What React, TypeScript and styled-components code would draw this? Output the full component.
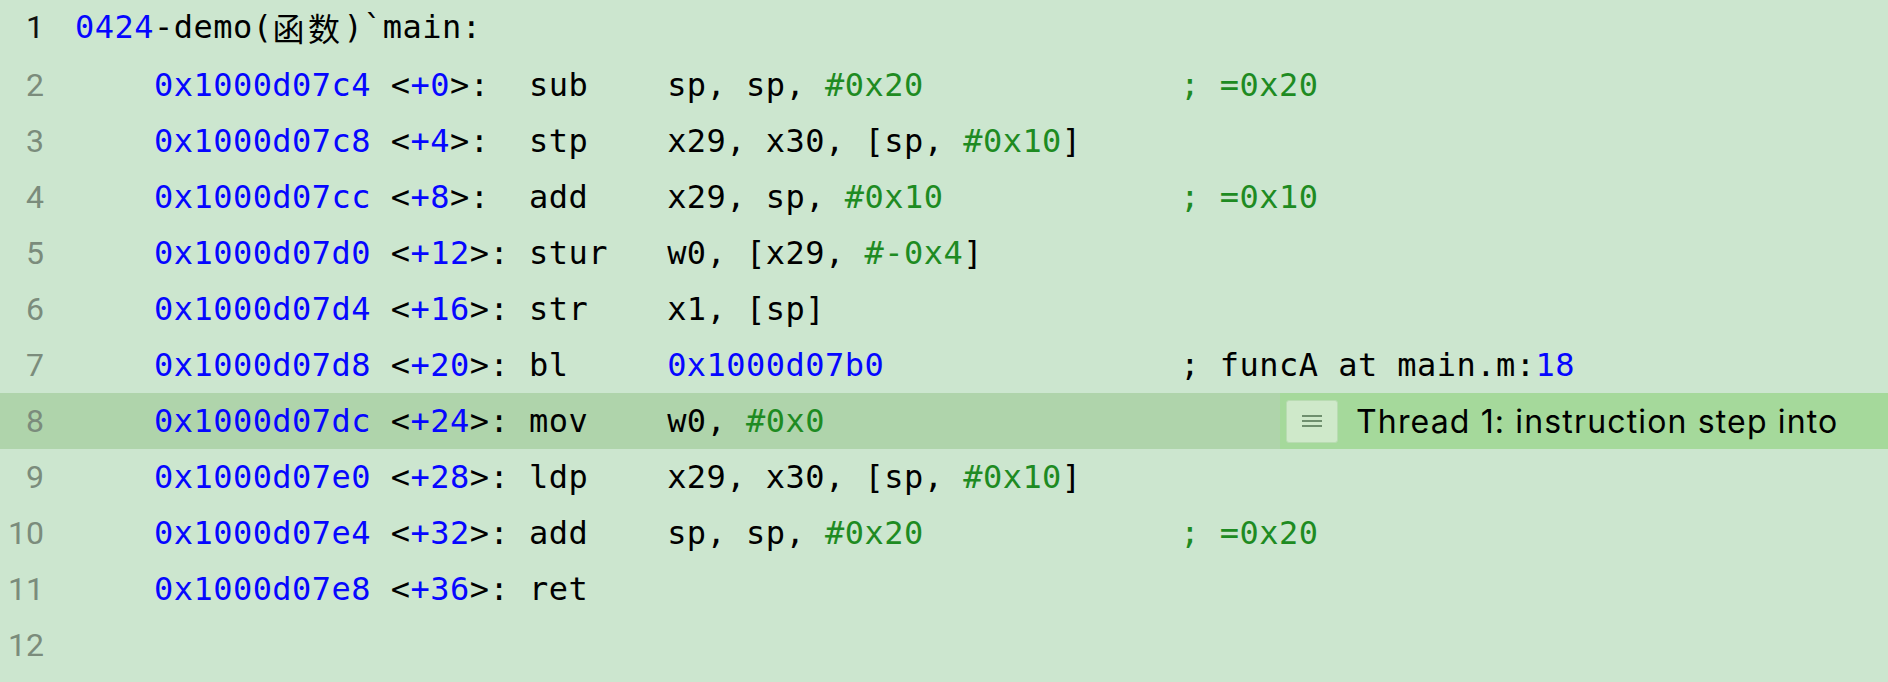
import React from "react";
import styled, { createGlobalStyle } from "styled-components";

const GlobalStyle = createGlobalStyle`
  html, body {
    margin: 0;
    padding: 0;
    background: #cce6cf;
  }
  #root {
    min-height: 100vh;
  }
`;

type Tone = "blue" | "green" | "black" | "cjk";

const toneColor: Record<Tone, string> = {
  blue: "#0606ff",
  green: "#1e8b22",
  black: "#000000",
  cjk: "#000000",
};

const Editor = styled.div`
  display: flex;
  flex-direction: column;
  padding-top: 1px;
  background: #cce6cf;
  width: 1888px;
  height: 682px;
  overflow: hidden;
`;

const Row = styled.div<{ $current?: boolean; $lift?: boolean }>`
  display: flex;
  align-items: stretch;
  box-sizing: border-box;
  height: 56px;
  padding-bottom: ${(p) => (p.$lift ? "5px" : "0")};
  background: ${(p) => (p.$current ? "#afd4ab" : "transparent")};
`;

const Gutter = styled.div<{ $active?: boolean }>`
  flex: none;
  width: 44px;
  display: flex;
  align-items: center;
  justify-content: flex-end;
  font-family: Roboto, "Liberation Sans", sans-serif;
  font-size: 32px;
  color: ${(p) => (p.$active ? "#111" : "#7b8c7c")};
`;

const Code = styled.div`
  flex: 1;
  display: flex;
  align-items: center;
  padding-left: 31px;
  font-family: "DejaVu Sans Mono", "Noto Sans CJK SC", monospace;
  font-size: 32px;
  letter-spacing: 0.47px;
  white-space: pre;
  color: #000;
`;

const Token = styled.span<{ $tone: Tone }>`
  color: ${(p) => toneColor[p.$tone]};
  letter-spacing: ${(p) => (p.$tone === "cjk" ? "3.5px" : "inherit")};
`;

const Annotation = styled.div`
  flex: none;
  width: 602px;
  display: flex;
  align-items: center;
  gap: 18px;
  padding-left: 6px;
  background: #a5d99b;
`;

const MenuBox = styled.div`
  flex: none;
  width: 52px;
  height: 43px;
  box-sizing: border-box;
  border: 1px solid #b9dcb2;
  border-radius: 3px;
  background: #cfe9ca;
  display: flex;
  align-items: center;
  justify-content: center;
`;

const AnnotationText = styled.span`
  font-family: Inter, "Liberation Sans", sans-serif;
  font-size: 32px;
  letter-spacing: 1.15px;
  color: #000;
`;

type Seg = [string, Tone];

const A = (s: string): Seg => [s, "blue"];
const G = (s: string): Seg => [s, "green"];
const K = (s: string): Seg => [s, "black"];
const C = (s: string): Seg => [s, "cjk"];

function instr(
  addr: string,
  off: string,
  mnem: string,
  ops: Seg[],
  comment?: Seg[]
): Seg[] {
  const head = `<+${off}>:`;
  const segs: Seg[] = [
    K("    "),
    A(addr),
    K(" <"),
    A(`+${off}`),
    K(">:" + " ".repeat(Math.max(1, 7 - head.length))),
    K(mnem.padEnd(7, " ")),
    ...ops,
  ];
  if (comment) {
    const used = segs.reduce((n, s) => n + s[0].length, 0);
    segs.push(K(" ".repeat(Math.max(1, 56 - used))));
    segs.push(...comment);
  }
  return segs;
}

const lines: Seg[][] = [
  [A("0424"), K("-demo("), C("函数"), K(")`main:")],
  instr("0x1000d07c4", "0", "sub", [K("sp, sp, "), G("#0x20")], [G("; =0x20")]),
  instr("0x1000d07c8", "4", "stp", [K("x29, x30, [sp, "), G("#0x10"), K("]")]),
  instr("0x1000d07cc", "8", "add", [K("x29, sp, "), G("#0x10")], [G("; =0x10")]),
  instr("0x1000d07d0", "12", "stur", [K("w0, [x29, "), G("#-0x4"), K("]")]),
  instr("0x1000d07d4", "16", "str", [K("x1, [sp]")]),
  instr("0x1000d07d8", "20", "bl", [A("0x1000d07b0")], [
    K("; funcA at main.m:"),
    A("18"),
  ]),
  instr("0x1000d07dc", "24", "mov", [K("w0, "), G("#0x0")]),
  instr("0x1000d07e0", "28", "ldp", [K("x29, x30, [sp, "), G("#0x10"), K("]")]),
  instr("0x1000d07e4", "32", "add", [K("sp, sp, "), G("#0x20")], [G("; =0x20")]),
  instr("0x1000d07e8", "36", "ret", []),
  [],
];

const MenuIcon = () => (
  <svg width="20" height="14" viewBox="0 0 20 14">
    <g stroke="#6f8f6e" strokeWidth="2">
      <line x1="0" y1="2" x2="20" y2="2" />
      <line x1="0" y1="7" x2="20" y2="7" />
      <line x1="0" y1="12" x2="20" y2="12" />
    </g>
  </svg>
);

export default function App() {
  return (
    <>
      <GlobalStyle />
      <Editor>
        {lines.map((segs, i) => {
          const n = i + 1;
          const current = n === 8;
          return (
            <Row key={n} $current={current} $lift={n === 1}>
              <Gutter $active={n === 1}>{n}</Gutter>
              <Code>
                {segs.map(([text, tone], j) => (
                  <Token key={j} $tone={tone}>
                    {text}
                  </Token>
                ))}
              </Code>
              {current && (
                <Annotation>
                  <MenuBox>
                    <MenuIcon />
                  </MenuBox>
                  <AnnotationText>Thread 1: instruction step into</AnnotationText>
                </Annotation>
              )}
            </Row>
          );
        })}
      </Editor>
    </>
  );
}
